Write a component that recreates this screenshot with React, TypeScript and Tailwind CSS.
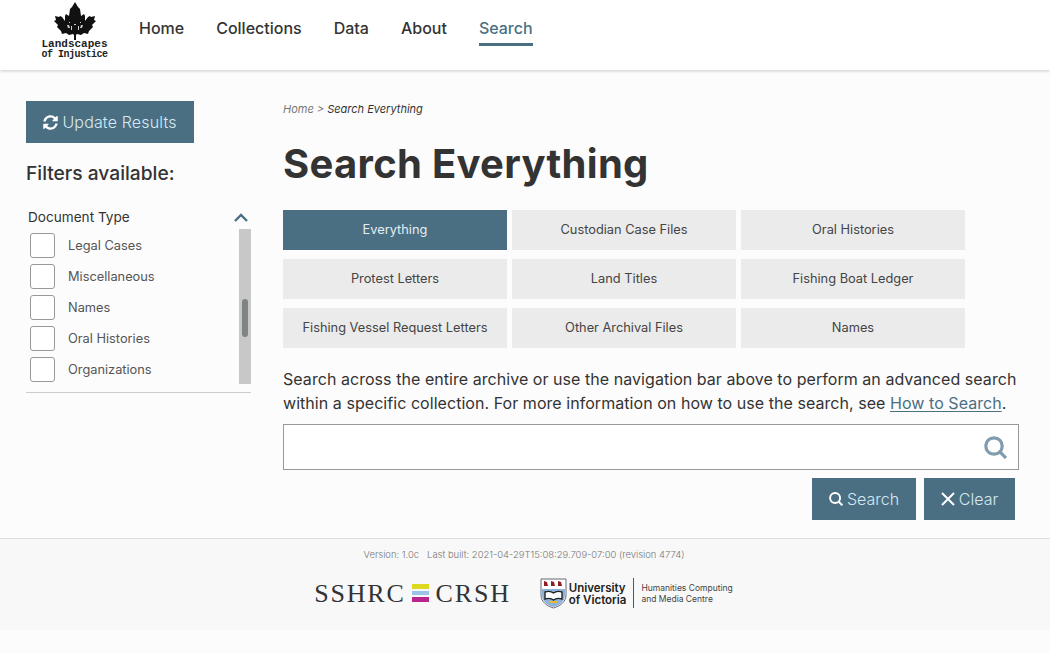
import { FaSyncAlt } from "react-icons/fa";

const navItems = ["Home", "Collections", "Data", "About", "Search"];
const filters = ["Legal Cases", "Miscellaneous", "Names", "Oral Histories", "Organizations"];
const scopes = [
  "Everything",
  "Custodian Case Files",
  "Oral Histories",
  "Protest Letters",
  "Land Titles",
  "Fishing Boat Ledger",
  "Fishing Vessel Request Letters",
  "Other Archival Files",
  "Names",
];

function MapleLeaf() {
  return (
    <svg width="42" height="38" viewBox="0 0 42 38" className="block">
      <path
        fill="#111"
        d="M21 0l3 5 2 2 1 7 3-2 1 2 0 5 3-4 2-1 1 1 4-1-1 4 2 1-4 4 1 2-4 4-1 3-4-1-3 2-4-1-1 1 0 5h-2l0-5-1-1-4 1-3-2-4 1-1-3-4-4 1-2-4-4 2-1-1-4 4 1 1-1 2 1 3 4 0-5 1-2 3 2 1-7 2-2z"
      />
      <path fill="#ccc" d="M13 23h2l1 3h-2zM17 24h1v4h-1zM20 22h2v1h-2zM24 24h1v4h-1zM27 23h2l-1 3h-2zM15 20h1v1h-1zM26 20h1v1h-1z" />
    </svg>
  );
}

function UvicShield() {
  return (
    <svg width="27" height="31" viewBox="0 0 27 31" className="block">
      <path fill="#fff" stroke="#667" strokeWidth="1" d="M1 1h25v16c0 7-6 11-12.5 13C7 28 1 24 1 17z" />
      <path fill="#8fb2d9" d="M2 11h23v6c0 6-5 10-11.500 12C7 27 2 23 2 17z" />
      <path fill="#8c1d22" d="M4 3l3 1 1 4H4zM11 3l3 1 1 4h-4zM18 3l3 1 1 4h-4z" />
      <path fill="#fff" stroke="#222" strokeWidth="1.400" d="M5 14c3-1 6-1 8.500 1 2.500-2 5.500-2 8.500-1v7c-3-1-6-1-8.500 1-2.500-2-5.500-2-8.500-1z" />
      <path fill="#e5b732" d="M9 23h9l-1 2h-7z" />
    </svg>
  );
}

function SearchGlyph({ size, color }: { size: number; color: string }) {
  return (
    <svg width={size} height={size} viewBox="0 0 23 23" fill="none" stroke={color} strokeWidth="3.2" className="block shrink-0">
      <circle cx="10" cy="10" r="8.2" />
      <path d="M16 16l6 6" />
    </svg>
  );
}

export default function App() {
  return (
    <div className="min-h-[653px] bg-[#fcfcfc] text-[#333] font-['Inter',sans-serif]">
      <header className="h-[70px] bg-white shadow-[0_1px_3px_rgba(0,0,0,0.2)] flex relative">
        <div className="w-[139px] pl-[41px] pt-[2px] shrink-0">
          <div className="w-[67px] flex flex-col items-center">
            <MapleLeaf />
            <div className="font-['Liberation_Mono',monospace] font-bold leading-[9.5px] text-[#222] text-center whitespace-nowrap">
              <div className="text-[11px]">Landscapes</div>
              <div className="text-[10px] tracking-[-0.5px]">of Injustice</div>
            </div>
          </div>
        </div>
        <nav className="flex gap-8 pt-[17px] text-[16px] font-medium">
          {navItems.map((item) => (
            <div
              key={item}
              className={
                item === "Search"
                  ? "h-[29px] leading-[22px] text-[#4a6f83] border-b-[3px] border-[#4a6f83]"
                  : "h-[29px] leading-[22px] text-[#333]"
              }
            >
              {item}
            </div>
          ))}
        </nav>
      </header>

      <div className="flex h-[469px] border-b border-[#ddd]">
        <aside className="w-[225px] ml-[26px] mr-[32px] shrink-0 pt-[31px]">
          <button className="w-[168px] h-[42px] bg-[#4a6f83] text-[#d8e8f0] text-[16px] font-light tracking-[0.15px] flex items-center justify-center gap-[4px]">
            <FaSyncAlt size={15} className="text-white" />
            Update Results
          </button>
          <h2 className="text-[19.2px] leading-[28px] font-medium mt-[16px]">Filters available:</h2>
          <div className="mt-[18px] border-b border-[#ccc] pb-[8px]">
            <div className="flex justify-between items-center h-[24px] pl-[2px] pr-[3px]">
              <span className="text-[13.6px]">Document Type</span>
              <svg width="14" height="9" viewBox="0 0 14 9" fill="none" stroke="#4a6f83" strokeWidth="2.4">
                <path d="M1 8l6-6 6 6" />
              </svg>
            </div>
            <div className="flex justify-between h-[155px]">
              <ul className="pl-[4px] pt-[4px] flex flex-col gap-[6px]">
                {filters.map((f) => (
                  <li key={f} className="flex items-center h-[25px] text-[12.8px] text-[#555]">
                    <span className="w-[25px] h-[25px] border border-[#999] rounded-[3px] bg-white mr-[13px]" />
                    {f}
                  </li>
                ))}
              </ul>
              <div className="w-[12px] bg-[#c8c8c8] flex justify-center pt-[70px]">
                <div className="w-[6px] h-[38px] bg-[#7f8585] rounded-[3px]" />
              </div>
            </div>
          </div>
        </aside>

        <main className="w-[736px] pt-[32px]">
          <div className="text-[11px] leading-[14px] italic text-[#777]">
            Home &gt; <span className="text-[#333]">Search Everything</span>
          </div>
          <h1 className="text-[40px] leading-[48px] font-bold tracking-[0.3px] mt-[24px]">Search Everything</h1>
          <div className="grid grid-cols-[224px_224px_224px] gap-x-[5px] gap-y-[9px] mt-[22px]">
            {scopes.map((s) =>
              s === "Everything" ? (
                <div key={s} className="h-[40px] flex items-center justify-center text-[12.8px] bg-[#4a6f83] text-[#e4eef3]">
                  {s}
                </div>
              ) : (
                <div key={s} className="h-[40px] flex items-center justify-center text-[12.8px] bg-[#ebebeb] text-[#444]">
                  {s}
                </div>
              )
            )}
          </div>
          <p className="text-[16px] leading-[24px] tracking-[0.05px] mt-[19px] text-[#333]">
            Search across the entire archive or use the navigation bar above to perform an advanced search within a
            specific collection. For more information on how to use the search, see{" "}
            <span className="text-[#4a6f83] underline underline-offset-2">How to Search</span>.
          </p>
          <div className="h-[46px] mt-[9px] bg-white border border-[#999] flex items-center justify-end pr-[11px]">
            <SearchGlyph size={23} color="#7f9dae" />
          </div>
          <div className="flex justify-end gap-[8px] mt-[8px] pr-[4px]">
            <button className="w-[104px] h-[42px] bg-[#4a6f83] text-[#d8e8f0] text-[16px] font-light flex items-center justify-center gap-[4px]">
              <SearchGlyph size={14} color="#fff" />
              Search
            </button>
            <button className="w-[91px] h-[42px] bg-[#4a6f83] text-[#d8e8f0] text-[16px] font-light flex items-center justify-center gap-[4px]">
              <svg width="14" height="14" viewBox="0 0 14 14" stroke="#fff" strokeWidth="2" fill="none">
                <path d="M1 1l12 12M13 1L1 13" />
              </svg>
              Clear
            </button>
          </div>
        </main>
      </div>

      <footer className="h-[91px] bg-[#f8f8f8] flex flex-col items-center">
        <div className="text-[9.45px] leading-[12px] font-light text-[#777] mt-[10px] pr-[2px] whitespace-pre">
          Version: 1.0c{"   "}Last built: 2021-04-29T15:08:29.709-07:00 (revision 4774)
        </div>
        <div className="flex items-center mt-[16px] h-[32px] pr-[3px]">
          <div className="flex items-center font-['Liberation_Serif',serif] text-[26px] tracking-[1.8px] text-[#333] mr-[29px]">
            <span>SSHRC</span>
            <div className="w-[17px] mr-[7px] ml-[6px] flex flex-col gap-[2px]">
              <div className="h-[5px] bg-[#dcd91e]" />
              <div className="h-[4px] bg-[#9cc3e6]" />
              <div className="h-[5px] bg-[#b9258f]" />
            </div>
            <span>CRSH</span>
          </div>
          <UvicShield />
          <div className="text-[11.5px] leading-[12px] font-semibold text-[#222] ml-[2px] pr-[7px] pt-[2px] h-[30px] flex flex-col justify-center border-r border-[#555]">
            <span>University</span>
            <span>of Victoria</span>
          </div>
          <div className="text-[8.5px] leading-[11px] text-[#444] ml-[7px] mt-[2px]">
            <div>Humanities Computing</div>
            <div>and Media Centre</div>
          </div>
        </div>
      </footer>
      <div className="h-[23px] bg-[#fcfcfc]" />
    </div>
  );
}
